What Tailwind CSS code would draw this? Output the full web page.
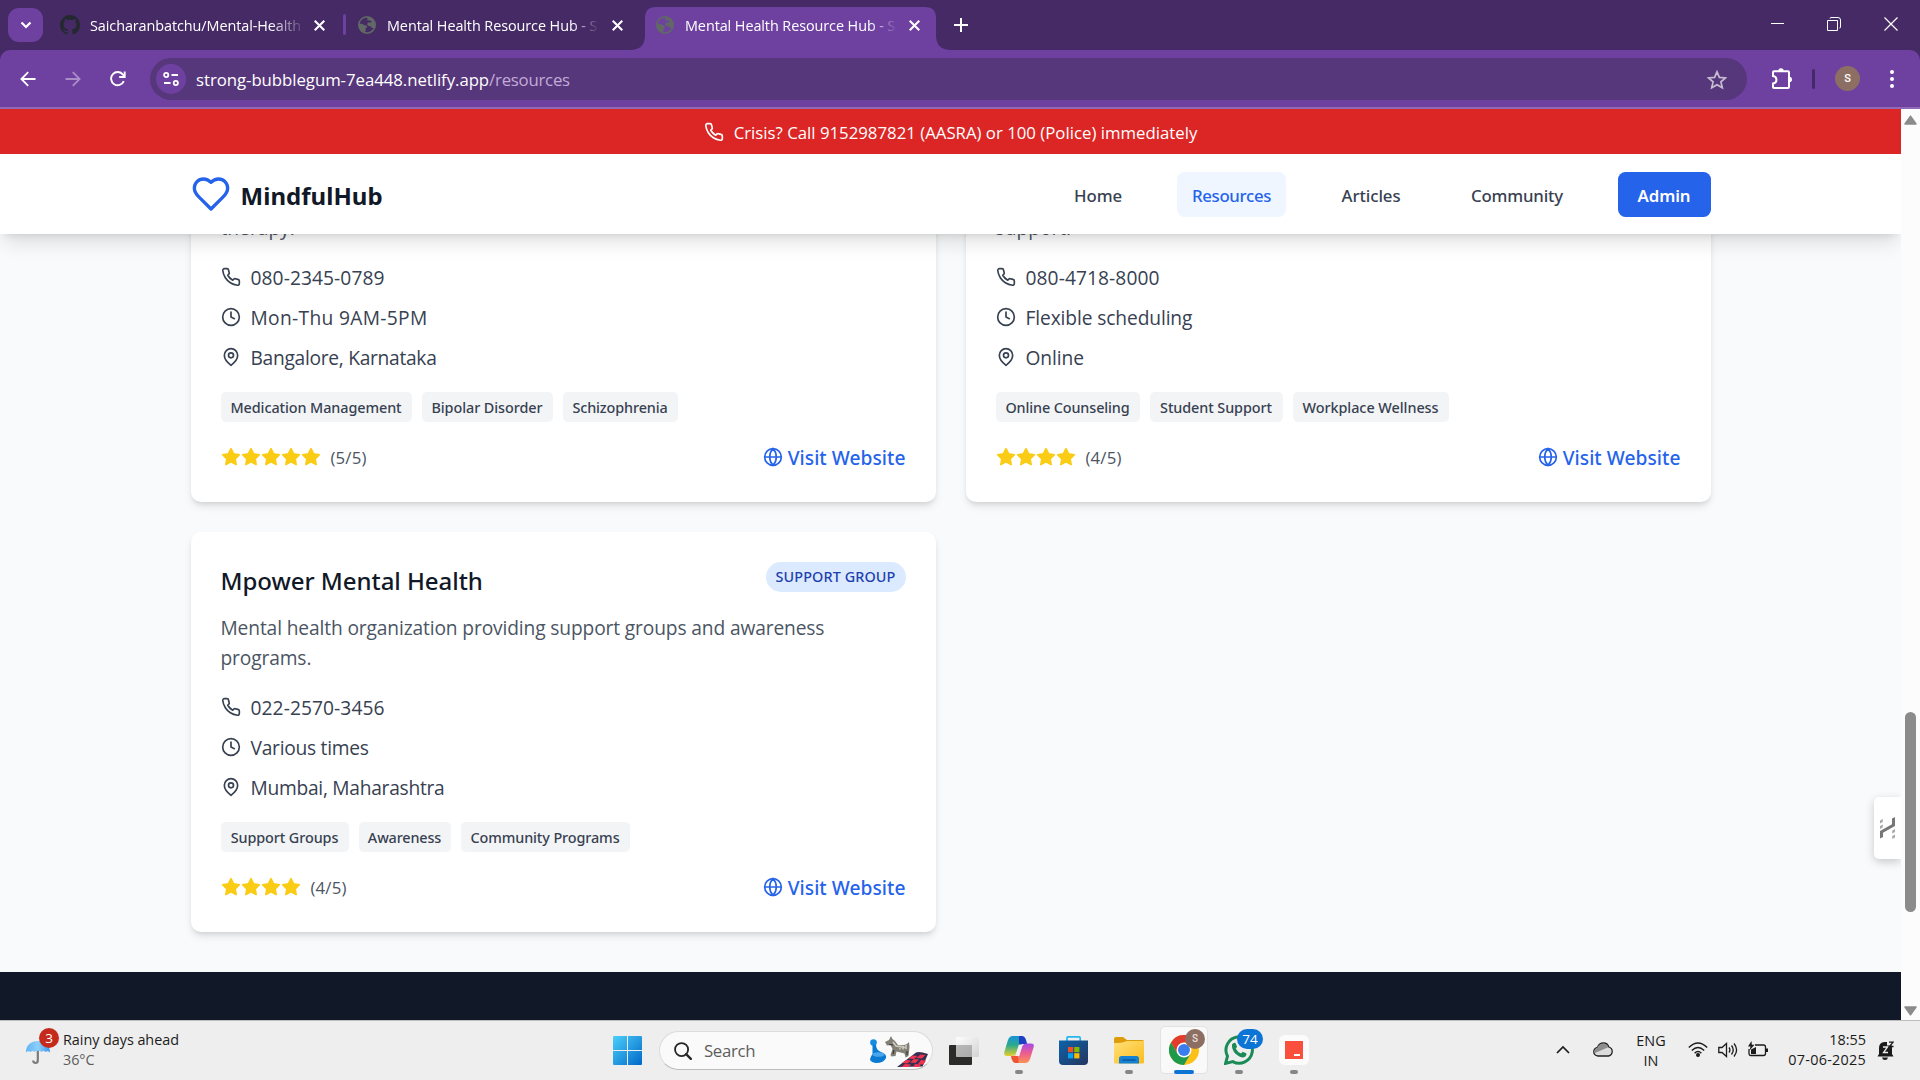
<!DOCTYPE html>
<html lang="en">
<head>
<meta charset="utf-8">
<title>Mental Health Resource Hub</title>
<script src="https://cdn.jsdelivr.net/npm/@tailwindcss/browser@4"></script>
</head>
<body class="w-[1920px] h-[1080px] overflow-hidden flex flex-col font-['Open_Sans',sans-serif] text-[#374151] bg-[#f9fafb]">
<svg width="0" height="0" class="absolute">
  <defs>
    <symbol id="phone" viewBox="0 0 24 24"><path d="M22 16.92v3a2 2 0 0 1-2.18 2 19.79 19.79 0 0 1-8.63-3.07 19.5 19.5 0 0 1-6-6 19.79 19.79 0 0 1-3.07-8.67A2 2 0 0 1 4.11 2h3a2 2 0 0 1 2 1.72 12.84 12.84 0 0 0 .7 2.81 2 2 0 0 1-.45 2.11L8.09 9.91a16 16 0 0 0 6 6l1.27-1.27a2 2 0 0 1 2.11-.45 12.84 12.84 0 0 0 2.81.7A2 2 0 0 1 22 16.92z" fill="none" stroke="currentColor" stroke-width="2" stroke-linecap="round" stroke-linejoin="round"/></symbol>
    <symbol id="clock" viewBox="0 0 24 24"><g fill="none" stroke="currentColor" stroke-width="2" stroke-linecap="round" stroke-linejoin="round"><circle cx="12" cy="12" r="10"/><path d="M12 6v6l4 2"/></g></symbol>
    <symbol id="pin" viewBox="0 0 24 24"><g fill="none" stroke="currentColor" stroke-width="2" stroke-linecap="round" stroke-linejoin="round"><path d="M20 10c0 6-8 12-8 12s-8-6-8-12a8 8 0 0 1 16 0Z"/><circle cx="12" cy="10" r="3"/></g></symbol>
    <symbol id="web" viewBox="0 0 24 24"><g fill="none" stroke="currentColor" stroke-width="2" stroke-linecap="round" stroke-linejoin="round"><circle cx="12" cy="12" r="10"/><path d="M12 2a14.5 14.5 0 0 0 0 20 14.5 14.5 0 0 0 0-20M2 12h20"/></g></symbol>
    <symbol id="star" viewBox="0 0 24 24"><path d="M12 2l3.09 6.26L22 9.27l-5 4.87 1.18 6.88L12 17.77l-6.18 3.25L7 14.14 2 9.27l6.91-1.01L12 2z" fill="currentColor" stroke="currentColor" stroke-width="2" stroke-linejoin="round"/></symbol>
    <symbol id="x" viewBox="0 0 12 12"><path d="M1.600 1.600l8.800 8.800M10.400 1.600l-8.800 8.800" stroke="currentColor" stroke-width="1.900"/></symbol>
    <symbol id="globe" viewBox="0 0 18 18"><circle cx="9" cy="9" r="9" fill="#616865"/><path d="M9.8 1.8C6 1.2 2.300 3.800 1.800 7.800c1.700-.2 3 .1 4 1 .8.8 2.200.5 3 1.200.7.700.3 1.600-.6 1.800-.9.300-.4 1.700-.4 2.500 0 1-.9 1.300-1.300 1.500 3.500 1.200 7.500-.3 9.200-3.800-1.400.1-2.300-.3-2.800-1.300-.5-1-1.900-.4-2.900-1-1.100-.8-1-2.400.1-3 1-.4 2.400.3 3.200-.5.600-.7-.3-1.500-1.100-1.700-1-.2-2.300.4-2.900-.5-.4-.8.3-1.600.5-2.200z" fill="currentColor"/></symbol>
    <linearGradient id="win" x1="0" y1="0" x2="1" y2="1"><stop offset="0" stop-color="#4cd0fb"/><stop offset="1" stop-color="#0067c8"/></linearGradient>
    <linearGradient id="umb" x1="0" y1="0" x2="1" y2="0"><stop offset="0" stop-color="#5fb4f5"/><stop offset=".5" stop-color="#8fd0fb"/><stop offset="1" stop-color="#3b97ee"/></linearGradient>
    <linearGradient id="fold" x1="0" y1="0" x2="1" y2="1"><stop offset="0" stop-color="#ffe07a"/><stop offset="1" stop-color="#fbbc1c"/></linearGradient>
    <linearGradient id="store" x1="0" y1="0" x2="1" y2="1"><stop offset="0" stop-color="#0c63ab"/><stop offset="1" stop-color="#25355e"/></linearGradient>
    <linearGradient id="copA" x1="0" y1="0" x2="0" y2="1"><stop offset="0" stop-color="#1793d8"/><stop offset=".45" stop-color="#2aa98e"/><stop offset="1" stop-color="#e6cf2a"/></linearGradient>
    <linearGradient id="copB" x1="0" y1="0" x2="0" y2="1"><stop offset="0" stop-color="#a54bea"/><stop offset=".5" stop-color="#ee5c8f"/><stop offset="1" stop-color="#fb9155"/></linearGradient>
    <linearGradient id="view" x1="0" y1="0" x2="1" y2="1"><stop offset="0" stop-color="#fff"/><stop offset="1" stop-color="#cfcfcf"/></linearGradient>
  </defs>
</svg>

<!-- Tab strip -->
<div class="h-[50px] shrink-0 bg-[#462a66] flex items-start text-white">
  <div class="ml-2 mt-2 w-[35px] h-[34px] rounded-[11px] bg-[#6e41a1] flex items-center justify-center">
    <svg class="w-3 h-2" viewBox="0 0 12 8"><path d="M1.500 1.500L6 6l4.500-4.500" fill="none" stroke="#fff" stroke-width="2.200"/></svg>
  </div>
  <div class="ml-[17px] h-[50px] w-[267px] flex items-center">
    <svg class="w-5 h-5" viewBox="0 0 16 16"><path fill="#24292f" d="M8 0C3.580 0 0 3.580 0 8c0 3.540 2.290 6.530 5.470 7.590.4.070.55-.17.55-.38 0-.19-.01-.82-.01-1.490-2.010.37-2.530-.49-2.690-.94-.09-.23-.48-.94-.82-1.130-.28-.15-.68-.52-.01-.53.63-.01 1.080.58 1.230.82.72 1.210 1.870.87 2.330.66.07-.52.28-.87.51-1.070-1.780-.2-3.640-.89-3.640-3.950 0-.87.31-1.590.82-2.150-.08-.2-.36-1.020.08-2.120 0 0 .67-.21 2.200.82.64-.18 1.320-.27 2-.27s1.360.09 2 .27c1.530-1.040 2.200-.82 2.200-.82.44 1.100.16 1.920.08 2.120.51.56.82 1.270.82 2.150 0 3.070-1.870 3.750-3.650 3.950.29.25.54.73.54 1.480 0 1.070-.01 1.930-.01 2.200 0 .21.15.46.55.38A8.010 8.010 0 0 0 16 8c0-4.420-3.580-8-8-8z"/></svg>
    <span class="ml-2.5 mt-px w-[211px] whitespace-nowrap text-[14.4px] tracking-[-0.005em] [mask-image:linear-gradient(to_right,#000_180px,transparent_216px)]">Saicharanbatchu/Mental-Health</span>
    <svg class="ml-[12px] w-[13px] h-[13px]"><use href="#x"/></svg>
  </div>
  <div class="ml-4 mt-3.5 w-[3px] h-[21px] rounded bg-[#6e41a1]"></div>
  <div class="ml-3 h-[50px] w-[272px] flex items-center">
    <svg class="w-[18px] h-[18px] text-[#462a66]"><use href="#globe"/></svg>
    <span class="ml-[11px] mt-px w-[210px] whitespace-nowrap text-[14.4px] tracking-[-0.005em] [mask-image:linear-gradient(to_right,#000_185px,transparent_212px)]">Mental Health Resource Hub - S</span>
    <svg class="ml-[14px] w-[13px] h-[13px]"><use href="#x"/></svg>
  </div>
  <div class="relative w-[321px] h-[50px] flex items-center">
    <svg class="absolute inset-0 w-[321px] h-[50px]" viewBox="0 0 321 50"><path fill="#6e41a1" d="M0 50C10 50 15 45 15 35V18Q15 7 26 7H295Q306 7 306 18V35C306 45 311 50 321 50Z"/></svg>
    <svg class="relative ml-[26px] w-[18px] h-[18px] text-[#6e41a1]"><use href="#globe"/></svg>
    <span class="relative ml-[11px] mt-px w-[210px] whitespace-nowrap text-[14.4px] tracking-[-0.005em] [mask-image:linear-gradient(to_right,#000_185px,transparent_212px)]">Mental Health Resource Hub - S</span>
    <svg class="relative ml-[13px] w-[13px] h-[13px]"><use href="#x"/></svg>
  </div>
  <svg class="ml-[3px] mt-[18px] w-3.5 h-3.5" viewBox="0 0 14 14"><path d="M7 0v14M0 7h14" stroke="#fff" stroke-width="2"/></svg>
  <div class="ml-auto mr-[22px] mt-[17px] flex items-center gap-[43px]">
    <svg class="w-[13px] h-[14px]" viewBox="0 0 13 14"><path d="M0 6.500h13" stroke="#fff"/></svg>
    <svg class="w-[14px] h-[14px]" viewBox="0 0 14 14"><path d="M.5 3.500h10v10h-10zM3 1.500Q3 .5 4 .5H11Q13.500.5 13.500 3V10q0 1-1 1" fill="none" stroke="#fff"/></svg>
    <svg class="w-[14px] h-[14px]" viewBox="0 0 14 14"><path d="M.5.5l13 13M13.500.5l-13 13" stroke="#fff" stroke-width="1.200"/></svg>
  </div>
</div>

<!-- Toolbar -->
<div class="h-[59px] shrink-0 bg-[#462a66]">
  <div class="h-[59px] bg-[#6e41a1] rounded-t-[10px] border-b-2 border-[#9068b6] flex items-center text-white">
    <svg class="ml-5 w-4 h-4" viewBox="0 0 16 16"><path d="M15.500 8H1.500M8.200 1.200L1.400 8l6.800 6.800" fill="none" stroke="#fff" stroke-width="1.800"/></svg>
    <svg class="ml-[29px] w-4 h-4" viewBox="0 0 16 16"><path d="M.5 8h14M7.800 1.200L14.600 8l-6.800 6.800" fill="none" stroke="#a98cc8" stroke-width="1.800"/></svg>
    <svg class="ml-[29px] w-4 h-4" viewBox="0 0 16 16"><path d="M13.800 10.200A6.600 6.600 0 1 1 13 3.700L14.600 5.600M14.700.4V6H9.200" fill="none" stroke="#fff" stroke-width="1.900"/></svg>
    <div class="ml-6 w-[1597px] h-[42px] rounded-full bg-[#57377b] flex items-center">
      <div class="ml-1.5 w-[30px] h-[30px] rounded-full bg-[#6e41a1] flex items-center justify-center">
        <svg class="w-4 h-4" viewBox="0 0 16 16" fill="none" stroke="#fff" stroke-width="1.800"><circle cx="3.200" cy="4" r="2.100"/><path d="M8.500 4H15M1 12h6.500"/><circle cx="12.800" cy="12" r="2.100"/></svg>
      </div>
      <span class="ml-2.5 mt-0.5 text-[16.8px] tracking-[-0.003em] whitespace-nowrap">strong-bubblegum-7ea448.netlify.app<span class="text-[#c2abd8] tracking-[-0.014em]">/resources</span></span>
      <svg class="ml-auto mr-5 w-5 h-5 mt-0.5" viewBox="0 0 20 20"><path d="M10 1.800l2.400 5.600 6.100.5-4.600 4 1.400 5.900L10 14.700l-5.300 3.100 1.400-5.900-4.600-4 6.100-.5z" fill="none" stroke="#c6bdd0" stroke-width="1.700"/></svg>
    </div>
    <svg class="ml-6 w-[22px] h-[22px]" viewBox="0 0 22 22"><path d="M2 4.200Q2 3.200 3 3.200H17Q18 3.200 18 4.200V19Q18 20 17 20H3Q2 20 2 19V15.600C6.600 15 6.600 8.600 2 8Z" fill="none" stroke="#fff" stroke-width="2"/><path d="M7.300 3a2.700 2.700 0 0 1 5.400 0zM18.300 8.800a2.700 2.700 0 0 1 0 5.400z" fill="#fff"/></svg>
    <div class="ml-[19px] w-[3px] h-5 rounded bg-[#462a66]"></div>
    <div class="ml-5 w-[25px] h-[25px] rounded-full bg-[#8d6e63] flex items-center justify-center text-[11px] font-[Roboto] font-medium leading-none">S</div>
    <svg class="ml-[29px] w-1.5 h-[18px]" viewBox="0 0 6 18"><g fill="#fff"><circle cx="3" cy="2" r="2"/><circle cx="3" cy="9" r="2"/><circle cx="3" cy="16" r="2"/></g></svg>
  </div>
</div>

<!-- Page viewport -->
<div class="h-[911px] shrink-0 flex">
  <div class="relative w-[1901px] h-[911px] overflow-hidden bg-[#f9fafb] flex flex-col">
    <div class="relative z-20 h-[45px] shrink-0 bg-[#dc2626] text-white flex items-center justify-center gap-2.5">
      <svg class="w-5 h-5"><use href="#phone"/></svg>
      <span class="text-[16.8px] pt-0.5 whitespace-nowrap">Crisis? Call 9152987821 (AASRA) or 100 (Police) immediately</span>
    </div>

    <header class="relative z-10 h-20 shrink-0 bg-white shadow-[0_12px_19px_-4px_rgba(0,0,0,0.12),0_5px_8px_-5px_rgba(0,0,0,0.12)] px-[190.5px] flex items-center justify-between">
      <div class="flex items-center gap-2.5 text-[#111827]">
        <svg class="w-10 h-10 text-[#2563eb]" viewBox="0 0 24 24" fill="none" stroke="currentColor" stroke-width="2" stroke-linecap="round" stroke-linejoin="round"><path d="M19 14c1.490-1.460 3-3.210 3-5.500A5.500 5.500 0 0 0 16.500 3c-1.760 0-3 .5-4.500 2-1.500-1.500-2.740-2-4.500-2A5.500 5.500 0 0 0 2 8.500c0 2.300 1.500 4.050 3 5.500l7 7Z"/></svg>
        <span class="text-[24px] font-bold pt-1 font-['Noto_Sans',sans-serif] tracking-[0.002em]">MindfulHub</span>
      </div>
      <nav class="flex items-center gap-10 text-[16.8px] font-medium font-['Noto_Sans',sans-serif] [&>*]:h-[45px] [&>*]:pt-[3px] [&>*]:rounded-[7.500px] [&>*]:flex [&>*]:items-center [&>*]:justify-center">
        <a class="w-[78px] tracking-[-0.005em]">Home</a>
        <a class="w-[109px] bg-[#eff6ff] text-[#2563eb] tracking-[-0.019em]">Resources</a>
        <a class="w-[90px] tracking-[-0.004em]">Articles</a>
        <a class="w-[122px] tracking-[-0.010em]">Community</a>
        <a class="ml-[-0.500px] w-[93px] bg-[#2563eb] text-white font-semibold tracking-[-0.004em]">Admin</a>
      </nav>
    </header>

    <main class="-mt-20 h-[789px] shrink-0 px-[190.5px] grid grid-cols-2 grid-rows-[348px_400px] gap-[30px] text-[19.2px] leading-[30px]">
      <article class="bg-white rounded-b-[10px] shadow-[0_5px_8px_-1px_rgba(0,0,0,0.1),0_3px_5px_-2px_rgba(0,0,0,0.1)] px-[30px] pt-[59px] flex flex-col">
        <p class="text-[#4b5563] mb-5">therapy.</p>
        <ul class="flex flex-col gap-2.5">
          <li class="flex gap-2.5"><svg class="w-5 h-5 mt-1"><use href="#phone"/></svg><span class="tracking-[0.004em]">080-2345-0789</span></li>
          <li class="flex gap-2.5"><svg class="w-5 h-5 mt-1"><use href="#clock"/></svg><span class="tracking-[0.017em]">Mon-Thu 9AM-5PM</span></li>
          <li class="flex gap-2.5"><svg class="w-5 h-5 mt-1"><use href="#pin"/></svg><span class="tracking-[-0.015em]">Bangalore, Karnataka</span></li>
        </ul>
        <div class="mt-[19px] flex gap-2.5 text-[14.4px] font-medium font-['Noto_Sans',sans-serif] [&>*]:h-[30px] [&>*]:leading-[31px] [&>*]:rounded-[5px] [&>*]:bg-[#f3f4f6] [&>*]:text-center">
          <span class="w-[191px] tracking-[-0.006em]">Medication Management</span><span class="w-[131px] tracking-[-0.005em]">Bipolar Disorder</span><span class="w-[115px] tracking-[-0.008em]">Schizophrenia</span>
        </div>
        <div class="mt-5 flex">
          <div class="flex mt-[5px] text-[#facc15] [&>svg]:w-5 [&>svg]:h-5"><svg><use href="#star"/></svg><svg><use href="#star"/></svg><svg><use href="#star"/></svg><svg><use href="#star"/></svg><svg><use href="#star"/></svg></div>
          <span class="ml-2.5 text-[16.8px] leading-[31px] text-[#4b5563] tracking-[0.009em]">(5/5)</span>
          <a class="ml-auto flex gap-[5px] text-[#2563eb] font-medium font-['Noto_Sans',sans-serif] leading-[31px] tracking-[0.002em]"><svg class="w-5 h-5 mt-[5px]"><use href="#web"/></svg>Visit Website</a>
        </div>
      </article>

      <article class="bg-white rounded-b-[10px] shadow-[0_5px_8px_-1px_rgba(0,0,0,0.1),0_3px_5px_-2px_rgba(0,0,0,0.1)] px-[30px] pt-[59px] flex flex-col">
        <p class="text-[#4b5563] mb-5">support.</p>
        <ul class="flex flex-col gap-2.5">
          <li class="flex gap-2.5"><svg class="w-5 h-5 mt-1"><use href="#phone"/></svg><span class="tracking-[0.004em]">080-4718-8000</span></li>
          <li class="flex gap-2.5"><svg class="w-5 h-5 mt-1"><use href="#clock"/></svg><span class="tracking-[-0.006em]">Flexible scheduling</span></li>
          <li class="flex gap-2.5"><svg class="w-5 h-5 mt-1"><use href="#pin"/></svg><span class="tracking-[-0.005em]">Online</span></li>
        </ul>
        <div class="mt-[19px] flex gap-2.5 text-[14.4px] font-medium font-['Noto_Sans',sans-serif] [&>*]:h-[30px] [&>*]:leading-[31px] [&>*]:rounded-[5px] [&>*]:bg-[#f3f4f6] [&>*]:text-center">
          <span class="w-[144px] tracking-[-0.008em]">Online Counseling</span><span class="w-[133px] tracking-[-0.006em]">Student Support</span><span class="w-[156px] tracking-[-0.003em]">Workplace Wellness</span>
        </div>
        <div class="mt-5 flex">
          <div class="flex mt-[5px] text-[#facc15] [&>svg]:w-5 [&>svg]:h-5"><svg><use href="#star"/></svg><svg><use href="#star"/></svg><svg><use href="#star"/></svg><svg><use href="#star"/></svg></div>
          <span class="ml-2.5 text-[16.8px] leading-[31px] text-[#4b5563] tracking-[0.009em]">(4/5)</span>
          <a class="ml-auto flex gap-[5px] text-[#2563eb] font-medium font-['Noto_Sans',sans-serif] leading-[31px] tracking-[0.002em]"><svg class="w-5 h-5 mt-[5px]"><use href="#web"/></svg>Visit Website</a>
        </div>
      </article>

      <article class="bg-white rounded-[10px] shadow-[0_5px_8px_-1px_rgba(0,0,0,0.1),0_3px_5px_-2px_rgba(0,0,0,0.1)] p-[30px] flex flex-col">
        <div class="h-9 mb-[15px] flex justify-between">
          <h3 class="text-[24px] leading-[38px] font-medium font-['Noto_Sans',sans-serif] text-[#111827] tracking-[-0.002em]">Mpower Mental Health</h3>
          <span class="w-[140px] h-[30px] rounded-full bg-[#dbeafe] text-[#1e40af] text-[14.4px] font-medium font-['Noto_Sans',sans-serif] text-center tracking-[0.008em]">SUPPORT GROUP</span>
        </div>
        <p class="text-[#4b5563] mb-5 tracking-[-0.007em]">Mental health organization providing support groups and awareness<br>programs.</p>
        <ul class="flex flex-col gap-2.5">
          <li class="flex gap-2.5"><svg class="w-5 h-5 mt-1"><use href="#phone"/></svg><span class="tracking-[0.004em]">022-2570-3456</span></li>
          <li class="flex gap-2.5"><svg class="w-5 h-5 mt-1"><use href="#clock"/></svg><span class="tracking-[-0.014em]">Various times</span></li>
          <li class="flex gap-2.5"><svg class="w-5 h-5 mt-1"><use href="#pin"/></svg><span class="tracking-[-0.014em]">Mumbai, Maharashtra</span></li>
        </ul>
        <div class="mt-[19px] flex gap-2.5 text-[14.4px] font-medium font-['Noto_Sans',sans-serif] [&>*]:h-[30px] [&>*]:leading-[31px] [&>*]:rounded-[5px] [&>*]:bg-[#f3f4f6] [&>*]:text-center">
          <span class="w-[128px] tracking-[-0.006em]">Support Groups</span><span class="w-[92px] tracking-[-0.010em]">Awareness</span><span class="w-[169px] tracking-[-0.007em]">Community Programs</span>
        </div>
        <div class="mt-5 flex">
          <div class="flex mt-[5px] text-[#facc15] [&>svg]:w-5 [&>svg]:h-5"><svg><use href="#star"/></svg><svg><use href="#star"/></svg><svg><use href="#star"/></svg><svg><use href="#star"/></svg></div>
          <span class="ml-2.5 text-[16.8px] leading-[31px] text-[#4b5563] tracking-[0.009em]">(4/5)</span>
          <a class="ml-auto flex gap-[5px] text-[#2563eb] font-medium font-['Noto_Sans',sans-serif] leading-[31px] tracking-[0.002em]"><svg class="w-5 h-5 mt-[5px]"><use href="#web"/></svg>Visit Website</a>
        </div>
      </article>
    </main>

    <footer class="mt-[29px] h-[48px] shrink-0 bg-[#111827]"></footer>

    <div class="absolute right-0 top-[688px] w-[27px] h-[62px] rounded-l-[5px] bg-white shadow-[0_3px_10px_rgba(0,0,0,0.2)] flex items-center">
      <svg class="ml-1.5 w-[15px] h-[22px]" viewBox="0 0 15 22"><path d="M0 21.500V14L12 7.200V1.500L15 0V9L3 15.800V20z" fill="#777"/><path d="M0 3.500L2.800 2v3L0 6.500zM0 9l2.800-1.500v3L0 12zM12.200 13.500L15 12v3l-2.800 1.500zM12.200 19L15 17.500v3L12.200 22z" fill="#aaa"/></svg>
    </div>
  </div>

  <!-- Scrollbar -->
  <div class="w-[19px] h-[911px] bg-[#fcfcfc] flex flex-col items-center">
    <svg class="mt-1.5 w-[13px] h-2.5 shrink-0" viewBox="0 0 13 10"><path d="M6.500 1.200L12 9H1z" fill="#8b8b8b" stroke="#8b8b8b" stroke-width="1.500" stroke-linejoin="round"/></svg>
    <div class="mt-[587px] w-[11px] h-[200px] rounded-full bg-[#8b8b8b]"></div>
    <svg class="mt-[94px] w-[13px] h-2.5 shrink-0" viewBox="0 0 13 10"><path d="M6.500 8.800L12 1H1z" fill="#8b8b8b" stroke="#8b8b8b" stroke-width="1.500" stroke-linejoin="round"/></svg>
  </div>
</div>

<!-- Taskbar -->
<div class="h-[60px] shrink-0 bg-[#eeeeee] border-t border-[#bdbdbd] flex items-center text-[#1b1b1b] text-[14.4px] leading-5">
  <div class="relative ml-[25px] w-[38px] h-full">
    <svg class="absolute left-0 top-[16px] w-[28px] h-[28px]" viewBox="0 0 28 28"><path d="M12.800 12V23.500Q12.800 26 10.500 26T8.200 23.500" fill="none" stroke="#7b7b7b" stroke-width="2.200"/><path d="M1 15.500C1 8 6 4 12.800 4S25 8 25 15.500Q22.500 13.500 20.500 15 18.500 13 16.500 15 13 12.500 9.500 15 7.500 13 5.500 15 3 13.500 1 15.500z" fill="url(#umb)"/></svg>
    <span class="absolute left-[14px] top-[7px] w-5 h-5 rounded-full bg-[#c42b1c] text-white text-[13.500px] text-center leading-5">3</span>
  </div>
  <div class="w-[201px] pb-0.5 tracking-[-0.003em]"><div>Rainy days ahead</div><div class="text-[#5c5c5c]">36°C</div></div>

  <svg class="ml-[349px] w-[29px] h-[29px]" viewBox="0 0 29 29"><path d="M1 0H14V14H0V1Q0 0 1 0zM15 0H28Q29 0 29 1V14H15zM0 15H14V29H1Q0 29 0 28zM15 15H29V28Q29 29 28 29H15z" fill="url(#win)"/></svg>
  <div class="ml-[17px] w-[274px] h-[39px] rounded-full bg-[#fafafa] border border-[#dcdcdc] border-b-[#bcbcbc] flex items-center">
    <svg class="ml-[14px] w-[18px] h-[18px]" viewBox="0 0 19 19"><circle cx="8" cy="8" r="6.900" fill="none" stroke="#262626" stroke-width="1.900"/><path d="M12.800 12.800l5 5" stroke="#262626" stroke-width="2.400" stroke-linecap="round"/></svg>
    <span class="ml-[12px] text-[16.8px] text-[#5d5d5d] tracking-[-0.020em]">Search</span>
    <svg class="ml-auto mr-[3px] w-[60px] h-[34px]" viewBox="0 0 60 34">
      <path d="M28 33L47 18.500Q50 17 59 20L53.500 32.500z" fill="#35304f"/><path d="M37 26l5 .5-3.500 3-5.500-.5zM43.500 21.500l5 .5-3.500 3-5.500-.5zM45 25l5 .5-3.500 3.500-5.500-.5zM51.500 20.500l5 .5-3.500 3.500-5.500-.5zM52 26l5 .5-2.500 4-5.500-.5zM36 30l6 .5-2.500 2.500h-7zM46 30l6 .5-2 2.500h-6z" fill="#ee3450"/>
      <circle cx="4.500" cy="8.500" r="3.300" fill="#168be0"/><path d="M3.500 11h3.500Q7 16 12 18 18 20 17 24 15 29 7 29 1 28 1 25 2 22 3.500 20z" fill="#0a7ad3"/><ellipse cx="9.500" cy="20.500" rx="6" ry="2.300" fill="#48a7ec"/>
      <path d="M16 8l4-2 2-4 1.500 3L26 7l3 4q5 1 9-1l2-2 .5 5-1 9-3 1.500-1-4-8-2-1 4.500-4 .5-1-1.500 2-6-2-4-3.500.5z" fill="#827f76"/><path d="M24 8l3 4 9 1.500M31 12v3.500M34 12v3.500M37 11v4" stroke="#cfccc2" stroke-width="1.500" fill="none"/><path d="M20 10.500l4 .5M25 16l-1 4M38 17v4" stroke="#3a3833" stroke-width="1.200"/>
    </svg>
  </div>
  <svg class="ml-4 w-[30px] h-[28px]" viewBox="0 0 30 28"><rect y="8" width="23" height="20" rx="1" fill="#2b2b2a"/><rect x="7" y="0" width="23" height="20" rx="1" fill="url(#view)" fill-opacity=".88"/><path d="M7 8H23V20H7z" fill="#8f8f8f" fill-opacity=".45"/></svg>

  <div class="ml-[13px] h-full flex [&>*]:relative [&>*]:w-[55px] [&>*]:h-full [&>*]:shrink-0">
    <div>
      <svg class="absolute left-[12px] top-[15px] w-[30px] h-[27px]" viewBox="0 0 30 27"><path d="M8.500 0H18L12.500 17Q11 20 7.500 20H3Q-.5 20 .3 16L4 4Q5.500 0 8.500 0z" fill="url(#copA)"/><path d="M15 0h3.500Q21 .5 22 4l1.200 4H19q-3 .5-4 3z" fill="#1c3fc4"/><path d="M21.500 27H12.500L18 10.500Q19.500 7.500 22.500 7.500H27Q30.500 7.500 29.700 11L26 23Q24.500 27 21.500 27z" fill="url(#copB)"/><path d="M14.500 27H11Q8.500 26 7.600 23L7 20H10q3.500-.5 4.500-4z" fill="#f0552f"/><path d="M15 8.500h3.800L15.200 20h-4z" fill="#f1eef4"/></svg>
      <span class="absolute left-[23px] top-[49px] w-2 h-1 rounded-full bg-[#868686]"></span>
    </div>
    <div>
      <svg class="absolute left-[12px] top-[15px] w-[29px] h-[29px]" viewBox="0 0 29 29"><path d="M8 6V2Q8 .8 9.200.8H20Q21.200.8 21.200 2V6" fill="none" stroke="#27b6ee" stroke-width="1.700"/><path d="M0 4.500H29V25Q29 29 25 29H4Q0 29 0 25z" fill="url(#store)"/><path d="M9 11h5.200v5.200H9z" fill="#f25022"/><path d="M15.200 11h5.200v5.200h-5.200z" fill="#7fba00"/><path d="M9 17.200h5.200v5.200H9z" fill="#00a4ef"/><path d="M15.200 17.200h5.200v5.200h-5.200z" fill="#ffb900"/></svg>
    </div>
    <div>
      <svg class="absolute left-[12px] top-[16px] w-[30px] h-[27px]" viewBox="0 0 30 27"><path d="M0 2Q0 0 2 0H9L13 3H28.500Q30 3 30 4.500V12H0z" fill="#dd9d0a"/><path d="M0 6Q7 6 10 5L13 4H30V25.500Q30 26.500 29 26.500H1Q0 26.500 0 25.500z" fill="url(#fold)"/><path d="M5 26.500V21.500Q5 19 7.500 19H22.500Q25 19 25 21.500V26.500z" fill="#1382d4"/><path d="M8.500 23h13" stroke="#0b4f8e" stroke-width="1.300"/></svg>
      <span class="absolute left-[23px] top-[49px] w-2 h-1 rounded-full bg-[#868686]"></span>
    </div>
    <div>
      <div class="absolute left-[3px] top-[5px] w-[48px] h-[48px] rounded-[5px] bg-[#f9f9f9] border border-[#e2e2e2]"></div>
      <svg class="absolute left-[12px] top-[14px] w-[30px] h-[30px]" viewBox="0 0 30 30"><circle cx="15" cy="15" r="15" fill="#fbc116"/><path d="M2 7.500A15 15 0 0 1 28 7.500H15L8.500 18.750z" fill="#e33b2e"/><path d="M2 7.500A15 15 0 0 0 15 30L21.500 18.750H8.500z" fill="#1f9a4d"/><circle cx="15" cy="15" r="7.500" fill="#fff"/><circle cx="15" cy="15" r="6" fill="#3b7ded"/></svg>
      <span class="absolute left-[28px] top-[8px] w-5 h-5 rounded-full bg-[#8d6e63] text-[#e8dcd8] text-[10px] font-[Roboto] font-medium leading-5 text-center">S</span>
      <span class="absolute left-[17px] top-[49px] w-5 h-1 rounded-full bg-[#0c74d4]"></span>
    </div>
    <div>
      <svg class="absolute left-[12px] top-[14px] w-[30px] h-[30px]" viewBox="0 0 30 30"><path d="M1.600 28.400L3.500 21.200A13.200 13.200 0 1 1 8.800 26.600z" fill="none" stroke="#1c8a57" stroke-width="3"/><path d="M8 9.500Q9.500 7 11.500 8L13 11.500Q12.500 13 11.800 13.800 13.500 17 17 18.500L18.800 16.800 22.500 18.500Q22.500 22 19 22.500 15.500 22.500 11.500 18.800 7.500 14.500 8 9.500z" fill="#1c8a57"/></svg>
      <span class="absolute left-[25px] top-[8px] w-[26px] h-5 rounded-full bg-[#0c74d4] text-white text-[13.500px] leading-5 text-center">74</span>
      <span class="absolute left-[23px] top-[49px] w-2 h-1 rounded-full bg-[#868686]"></span>
    </div>
    <div>
      <div class="absolute left-[12px] top-[14px] w-[30px] h-[30px] rounded-[6px] bg-[#fbfbfb]"></div>
      <div class="absolute left-[18px] top-[20px] w-[18px] h-[18px] bg-[#fb4f3e]"></div>
      <div class="absolute left-[27px] top-[33px] w-1.5 h-[2px] bg-white"></div>
      <span class="absolute left-[23px] top-[49px] w-2 h-1 rounded-full bg-[#868686]"></span>
    </div>
  </div>

  <svg class="ml-auto mb-[2px] w-[14px] h-[9px]" viewBox="0 0 14 9"><path d="M1 8l6-6 6 6" fill="none" stroke="#1b1b1b" stroke-width="1.700"/></svg>
  <svg class="ml-[23px] mb-[3px] w-[20px] h-[15px]" viewBox="0 0 20 15"><path d="M5 14Q.8 13.500.8 9.800.8 6.500 4.500 5.500 6 1 10.500 1 14.500 1 15.800 5 19.200 6 19.200 9.500T15.500 14z" fill="#dcdcdc" stroke="#222" stroke-width="1.300"/><path d="M4.500 5.500Q6 1.600 10.500 1.600 14 1.600 15.200 5.200L2 11Q0 7 4.500 5.500z" fill="#8d8d8d"/></svg>
  <div class="ml-[22px] w-[32px] text-center"><div>ENG</div><div>IN</div></div>
  <svg class="ml-[21px] mb-[2px] w-[20px] h-[15px]" viewBox="0 0 20 15" fill="none" stroke="#1b1b1b" stroke-width="1.400"><path d="M.8 5.500Q10-3.600 19.200 5.500M3.800 8.500Q10 2.600 16.200 8.500M6.600 11.200Q10 8 13.400 11.200"/><circle cx="10" cy="13" r="1.300" fill="#1b1b1b"/></svg>
  <svg class="ml-[10px] mb-[2px] w-[20px] h-[16px]" viewBox="0 0 20 16" fill="none" stroke="#1b1b1b" stroke-width="1.300"><path d="M.8 5.500H4L8.500 1.500V14.500L4 10.500H.8z"/><path d="M11 5.500q1.800 2.500 0 5M13.500 3.500q3.500 4.500 0 9M16 1.500q5.200 6.500 0 13"/></svg>
  <svg class="ml-[10px] mb-[3px] w-[20px] h-[16px]" viewBox="0 0 20 16"><path d="M7 4H15.500Q17.500 4 17.500 6V12.500Q17.500 14.500 15.500 14.500H3Q1 14.500 1 12.500V8" fill="none" stroke="#1b1b1b" stroke-width="1.300"/><path d="M18 7.500h2v3.500h-2zM3 8.500l5-2.500v7H3zM3.500 0L0 5.500H2.500L1.500 9.500 6.500 3.800H3.800z" fill="#1b1b1b"/></svg>
  <div class="ml-[20px] w-[78px] pb-0.5 text-right tracking-[0.018em] whitespace-nowrap"><div class="tracking-[0em]">18:55</div><div>07-06-2025</div></div>
  <svg class="ml-[11px] mr-[26px] mb-px w-[17px] h-[19px]" viewBox="0 0 17 19"><path d="M2 13V7Q2 1.500 7.500 1H10V4.500H15V13L16.500 15.500H.5zM5 16.500h6Q10.500 19 8 19T5 16.500z" fill="#1b1b1b"/><path d="M6 6h4.500L6.500 11.500H11" fill="none" stroke="#eee" stroke-width="1.300"/><path d="M12 1.200h4L12.500 5.500H16.500" fill="none" stroke="#1b1b1b" stroke-width="1.300"/></svg>
</div>
</body>
</html>
